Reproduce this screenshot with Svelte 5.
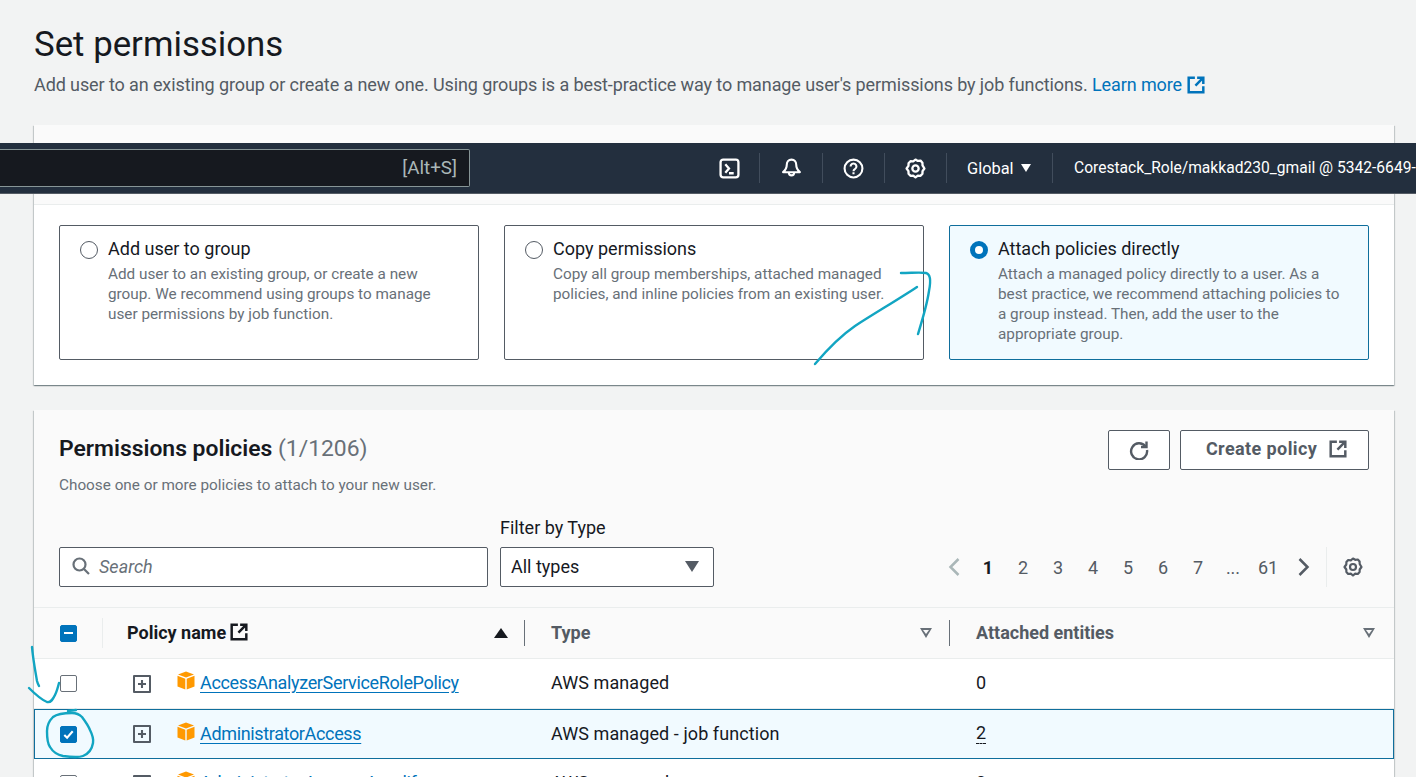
<script>
  const tiles = [
    {
      title: "Add user to group",
      text: "Add user to an existing group, or create a new group. We recommend using groups to manage user permissions by job function.",
      active: false
    },
    {
      title: "Copy permissions",
      text: "Copy all group memberships, attached managed policies, and inline policies from an existing user.",
      active: false
    },
    {
      title: "Attach policies directly",
      text: "Attach a managed policy directly to a user. As a best practice, we recommend attaching policies to a group instead. Then, add the user to the appropriate group.",
      active: true
    }
  ];

  const pages = ["1", "2", "3", "4", "5", "6", "7", "...", "61"];

  const rows = [
    { name: "AccessAnalyzerServiceRolePolicy", type: "AWS managed", count: "0", selected: false },
    { name: "AdministratorAccess", type: "AWS managed - job function", count: "2", selected: true },
    { name: "AdministratorAccess-Amplify", type: "AWS managed", count: "0", selected: false }
  ];
</script>

{#snippet external(cls)}
  <svg class={cls} viewBox="0 0 16 16" fill="none" stroke="currentColor" stroke-width="2.2">
    <path d="M7 1.500H1.500v13h13V9" />
    <path d="M7.500 8.500L14 1.800M9 1.500h5.500V7" />
  </svg>
{/snippet}

{#snippet gear(cls)}
  <svg class={cls} viewBox="0 0 20 20" fill="none" stroke="currentColor" stroke-width="2.2" stroke-linejoin="round">
    <path d="M10 1.500l2.200 1.300 2.600-.3 1.800 2 .1 2.500L18.500 10l-1.800 2.500-.1 2.500-1.800 2-2.600-.3L10 18.500l-2.200-1.800-2.600.3-1.800-2-.1-2.500L1.500 10l1.800-2.500.1-2.500 1.800-2 2.600.3z" />
    <circle cx="10" cy="10" r="3" />
  </svg>
{/snippet}

{#snippet cube()}
  <svg class="cube" viewBox="0 0 18 18" preserveAspectRatio="none">
    <path d="M9 0.500l8 2.800-8 2.900-8-2.900z" fill="#ff9900" />
    <path d="M.500 4.500l7.800 2.800v10.200L.500 14.700z" fill="#ff9900" />
    <path d="M17.500 4.500L9.700 7.300v10.200l7.800-2.800z" fill="#ff9900" />
  </svg>
{/snippet}

<div class="page">
  <h1>Set permissions</h1>
  <p class="lead">
    Add user to an existing group or create a new one. Using groups is a best-practice way to manage user's permissions by job functions.
    <a href="#learn">Learn more</a>
    {@render external("lead-ext")}
  </p>

  <section class="card options">
    <div class="options-head"></div>
    <div class="tiles">
      {#each tiles as tile}
        <div class="tile" class:active={tile.active}>
          <span class="radio"></span>
          <div class="tile-body">
            <div class="tile-title">{tile.title}</div>
            <div class="tile-text">{tile.text}</div>
          </div>
        </div>
      {/each}
    </div>
  </section>

  <section class="card policies">
    <div class="policies-head">
      <div class="head-top">
        <div>
          <h2>Permissions policies <span class="count">(1/1206)</span></h2>
          <p class="sub">Choose one or more policies to attach to your new user.</p>
        </div>
        <div class="actions">
          <button type="button" class="btn refresh" aria-label="Refresh">
            <svg viewBox="0 0 20 20" fill="none" stroke="currentColor" stroke-width="2.4">
              <path d="M16.500 6.500A8 8 0 1 0 18 10" />
              <path d="M17.500 1.500v5.500H12" />
            </svg>
          </button>
          <button type="button" class="btn create">Create policy {@render external("btn-ext")}</button>
        </div>
      </div>
      <div class="filters">
        <div class="search">
          <svg viewBox="0 0 18 18" fill="none" stroke="#687078" stroke-width="2.2">
            <circle cx="7.500" cy="7.500" r="6" />
            <path d="M12 12l5 5" />
          </svg>
          <span>Search</span>
        </div>
        <div class="type-filter">
          <label for="type-select">Filter by Type</label>
          <div class="select" id="type-select">
            <span>All types</span>
            <i class="select-caret"></i>
          </div>
        </div>
        <div class="pager">
          <svg class="chev off" viewBox="0 0 12 20" fill="none" stroke="currentColor" stroke-width="2.500"><path d="M10 2L2 10l8 8" /></svg>
          {#each pages as p, i}
            <span class="pg" class:current={i === 0}>{p}</span>
          {/each}
          <svg class="chev next" viewBox="0 0 12 20" fill="none" stroke="currentColor" stroke-width="2.500"><path d="M2 2l8 8-8 8" /></svg>
          <span class="pager-sep"></span>
          {@render gear("pager-gear")}
        </div>
      </div>
    </div>

    <div class="thead">
      <div class="cell check-cell">
        <span class="box checked"><i class="dash"></i></span>
        <span class="thin-sep"></span>
      </div>
      <div class="cell name-cell th dark">
        Policy name {@render external("th-ext")}
        <i class="sort-up"></i>
      </div>
      <div class="cell th type-cell">
        Type
        <i class="sort-down" style="right: 18px"></i>
      </div>
      <div class="cell th attached-cell">
        Attached entities
        <i class="sort-down" style="right: 19px"></i>
      </div>
    </div>

    {#each rows as row}
      <div class="row" class:selected={row.selected}>
        <div class="cell check-cell">
          <span class="box" class:checked={row.selected}>
            {#if row.selected}
              <svg viewBox="0 0 16 16" fill="none" stroke="#fff" stroke-width="2.200"><path d="M3.500 8.500l3 3 6-7" /></svg>
            {/if}
          </span>
        </div>
        <div class="cell name-cell">
          <span class="expand"><svg viewBox="0 0 10 10" stroke="#545b64" stroke-width="2.600"><path d="M5 0v10M0 5h10" /></svg></span>
          {@render cube()}
          <a href="#policy">{row.name}</a>
        </div>
        <div class="cell type-cell">{row.type}</div>
        <div class="cell attached-cell">
          {#if row.count === "2"}<span class="dotted">{row.count}</span>{:else}{row.count}{/if}
        </div>
      </div>
    {/each}
  </section>

  <header class="topnav">
    <div class="nav-search"><span>[Alt+S]</span></div>
    <div class="nav-item first">
      <svg class="nav-ico" viewBox="0 0 20 20" fill="none" stroke="#fff" stroke-width="2.2">
        <rect x="1.500" y="1.500" width="17" height="17" rx="2.500" />
        <path d="M6 6L9.500 10 6 14M9.500 14.500H14" />
      </svg>
    </div>
    <div class="nav-item bell">
      <svg class="nav-ico" viewBox="0 0 20 20" fill="none" stroke="#fff" stroke-width="2" stroke-linejoin="round">
        <path d="M10 1.500c3 0 4.500 2.500 4.500 5 0 3 .5 4.500 3.500 7H2c3-2.500 3.500-4 3.500-7 0-2.500 1.500-5 4.500-5z" />
        <path d="M7.500 14a2.500 2.500 0 0 0 5 0" />
      </svg>
    </div>
    <div class="nav-item">
      <svg class="nav-ico" viewBox="0 0 20 20" fill="none" stroke="#fff" stroke-width="2">
        <circle cx="10" cy="10" r="8.500" />
        <path d="M7.200 8a2.800 2.800 0 1 1 4.300 2.400c-1 .6-1.500 1-1.500 2.100M10 13.500v2" />
      </svg>
    </div>
    <div class="nav-item">
      {@render gear("nav-ico")}
    </div>
    <div class="nav-item region">Global <i class="nav-caret"></i></div>
    <div class="nav-item account">Corestack_Role/makkad230_gmail @ 5342-6649-9213</div>
  </header>

  <svg class="ink" viewBox="0 0 1416 777" fill="none" stroke="#12a5c2" stroke-width="2.400" stroke-linecap="round" stroke-linejoin="round">
    <path d="M901 273c10 0 20-1 25 0 4 1 5 8 3 18-2 14-7 30-11 43" />
    <path d="M917 287c-18 12-42 26-62 39-16 11-29 25-40 38" />
    <path d="M32 647c1 12 3 22 5 34 .5 2 1 3 2 5" />
    <path d="M29 688c5 5 13 12 18 14 4 1 6-3 8-7 2-4 3-8 4-12" />
    <path d="M68 711l8-1" />
    <path d="M72 713c-8 0-15 1-19 4-4 4-6 9-6 14 0 6 0 12 3 16 3 5 8 8 13 9 7 1 15 2 20 0 5-2 9-7 10-13 1-5-1-9-3-13-2-5-5-9-8-13-3-3-6-4-10-4" />
  </svg>
</div>

<style>
  :global(body) {
    margin: 0;
    font-family: "Roboto", "Liberation Sans", sans-serif;
    color: #16191f;
  }

  .page {
    position: relative;
    box-sizing: border-box;
    height: 777px;
    overflow: hidden;
    padding: 0 22px 0 34px;
    background: #f2f3f3;
  }

  h1 {
    margin: 0;
    padding-top: 24px;
    font-size: 34.800px;
    line-height: 40px;
    font-weight: 400;
  }

  .lead {
    margin: 11px 0 0;
    font-size: 18px;
    line-height: 20px;
    letter-spacing: -0.104px;
    color: #545b64;
    white-space: nowrap;
  }

  .lead a {
    color: #0073bb;
    text-decoration: none;
  }

  :global(.lead-ext) {
    width: 18px;
    height: 18px;
    color: #0073bb;
    vertical-align: -3px;
    margin-left: 1px;
  }

  .card {
    background: #fff;
    box-shadow: 0 1px 1px 0 rgba(0, 28, 36, 0.3), 1px 1px 1px 0 rgba(0, 28, 36, 0.15), -1px 1px 1px 0 rgba(0, 28, 36, 0.15);
  }

  .options {
    margin-top: 30px;
    height: 260px;
  }

  .options-head {
    height: 79px;
    background: #fafafa;
    border-bottom: 1px solid #eaeded;
  }

  .tiles {
    display: grid;
    grid-template-columns: repeat(3, 420px);
    column-gap: 25px;
    padding: 20px 25px 0;
  }

  .tile {
    box-sizing: border-box;
    height: 135px;
    display: flex;
    gap: 10px;
    padding: 13px 20px;
    border: 1px solid #545b64;
    border-radius: 2px;
  }

  .tile.active {
    background: #f1faff;
    border-color: #0f6e9c;
  }

  .radio {
    flex: none;
    box-sizing: border-box;
    width: 18px;
    height: 18px;
    margin-top: 2px;
    border: 1.500px solid #545b64;
    border-radius: 50%;
    background: #fff;
  }

  .active .radio {
    border: 5px solid #0073bb;
  }

  .tile-body {
    width: 345px;
  }

  .tile-title {
    font-size: 18px;
    line-height: 20px;
  }

  .tile-text {
    margin-top: 5px;
    font-size: 15.300px;
    line-height: 20px;
    color: #687078;
  }

  .policies {
    margin-top: 25px;
    background: #fafafa;
  }

  .policies-head {
    padding: 20px 25px 0;
    height: 198px;
    box-sizing: border-box;
    border-bottom: 1px solid #eaeded;
  }

  .head-top {
    display: flex;
    justify-content: space-between;
    height: 88px;
  }

  h2 {
    margin: 7px 0 0;
    font-size: 22.900px;
    line-height: 24px;
    font-weight: 600;
  }

  .count {
    font-weight: 400;
    color: #687078;
  }

  .sub {
    margin: 14px 0 0;
    font-size: 15.300px;
    line-height: 20px;
    color: #687078;
  }

  .actions {
    display: flex;
    gap: 10px;
  }

  .btn {
    box-sizing: border-box;
    height: 40px;
    border: 1px solid #545b64;
    border-radius: 2px;
    background: #fff;
    color: #545b64;
    font: inherit;
  }

  .refresh {
    width: 62px;
    padding: 0;
  }

  .refresh svg {
    width: 20px;
    height: 20px;
    vertical-align: middle;
  }

  .create {
    width: 189px;
    font-size: 18px;
    font-weight: 700;
    letter-spacing: 0.4px;
    padding: 0 0 3px 4px;
  }

  :global(.btn-ext) {
    width: 18px;
    height: 18px;
    vertical-align: -3px;
    margin-left: 7px;
  }

  .filters {
    display: flex;
    align-items: flex-end;
  }

  .search {
    box-sizing: border-box;
    width: 429px;
    height: 40px;
    display: flex;
    align-items: center;
    gap: 9px;
    padding: 0 0 2px 12px;
    border: 1px solid #545b64;
    border-radius: 2px;
    background: #fff;
    font-style: italic;
    font-size: 18px;
    color: #687078;
  }

  .search svg {
    width: 18px;
    height: 18px;
  }

  .type-filter {
    margin-left: 12px;
    width: 214px;
  }

  .type-filter label {
    display: block;
    font-size: 18px;
    line-height: 20px;
    margin-bottom: 9px;
    color: #16191f;
  }

  .select {
    box-sizing: border-box;
    height: 40px;
    display: flex;
    align-items: center;
    justify-content: space-between;
    padding: 0 14px 2px 10px;
    border: 1px solid #545b64;
    border-radius: 2px;
    background: #fff;
    font-size: 18px;
  }

  .select-caret {
    border-left: 7px solid transparent;
    border-right: 7px solid transparent;
    border-top: 11px solid #545b64;
  }

  .pager {
    margin-left: auto;
    margin-right: 6px;
    display: flex;
    align-items: center;
    height: 40px;
    color: #545b64;
    font-size: 18px;
  }

  .pg {
    width: 35px;
    text-align: center;
  }

  .pg.current {
    color: #16191f;
    font-weight: 700;
  }

  .chev {
    width: 13px;
    height: 20px;
    color: #545b64;
  }

  .chev.off {
    color: #aab7b8;
    margin-right: 9.500px;
  }

  .chev.next {
    margin-left: 11.500px;
  }

  .pager-sep {
    width: 1px;
    height: 40px;
    background: #eaeded;
    margin: 0 16px;
  }

  :global(.pager-gear) {
    width: 20px;
    height: 20px;
  }

  .thead,
  .row {
    display: grid;
    grid-template-columns: 69px 422px 425px 1fr;
    align-items: center;
  }

  .thead {
    box-sizing: border-box;
    height: 51px;
    border-bottom: 1px solid #eaeded;
    font-weight: 700;
    color: #545b64;
    font-size: 18px;
  }

  .cell {
    position: relative;
    display: flex;
    align-items: center;
    height: 100%;
    white-space: nowrap;
  }

  .check-cell {
    padding-left: 26px;
  }

  .name-cell {
    padding-left: 24px;
  }

  .thead .name-cell,
  .thead .type-cell,
  .thead .attached-cell {
    padding-bottom: 2px;
    box-sizing: border-box;
  }

  .thead .type-cell,
  .thead .attached-cell {
    padding-left: 26px;
  }

  .dark {
    color: #16191f;
    gap: 4px;
  }

  :global(.th-ext) {
    width: 18px;
    height: 18px;
    color: #16191f;
  }

  .thin-sep {
    position: absolute;
    right: 0;
    top: 10px;
    bottom: 10px;
    width: 1px;
    background: #eaeded;
  }

  .thead .name-cell::after,
  .thead .type-cell::after {
    content: "";
    position: absolute;
    right: 0;
    top: 12px;
    bottom: 12px;
    width: 1px;
    background: #687078;
  }

  .sort-up {
    position: absolute;
    right: 17px;
    top: 20px;
    border-left: 7px solid transparent;
    border-right: 7px solid transparent;
    border-bottom: 10px solid #16191f;
  }

  .sort-down {
    position: absolute;
    top: 20px;
    width: 0;
    height: 0;
    border-left: 6px solid transparent;
    border-right: 6px solid transparent;
    border-top: 10px solid #687078;
  }

  .sort-down::after {
    content: "";
    position: absolute;
    left: -3px;
    top: -8px;
    border-left: 3px solid transparent;
    border-right: 3px solid transparent;
    border-top: 4px solid #fafafa;
  }

  .row {
    box-sizing: border-box;
    height: 50px;
    background: #fff;
    border-bottom: 1px solid #eaeded;
    font-size: 18px;
  }

  .row.selected {
    background: #f1faff;
    outline: 1px solid #0f6e9c;
    outline-offset: -1px;
    border-bottom: none;
  }

  .row .type-cell,
  .row .attached-cell {
    box-sizing: border-box;
    padding: 0 0 2px 26px;
    letter-spacing: 0.08px;
  }

  .box {
    box-sizing: border-box;
    display: inline-flex;
    align-items: center;
    justify-content: center;
    width: 17px;
    height: 17px;
    border: 1px solid #687078;
    border-radius: 2px;
    background: #fff;
  }

  .box.checked {
    background: #0073bb;
    border-color: #0073bb;
  }

  .box svg {
    width: 15px;
    height: 15px;
  }

  .dash {
    width: 9px;
    height: 2px;
    background: #fff;
  }

  .expand {
    box-sizing: border-box;
    display: inline-flex;
    align-items: center;
    justify-content: center;
    width: 18px;
    height: 18px;
    margin-left: 6px;
    border: 2.500px solid #545b64;
    border-radius: 1px;
  }

  .expand svg {
    width: 8px;
    height: 8px;
  }

  :global(.cube) {
    width: 18px;
    height: 19px;
    margin: -6px 5px 0 26px;
  }

  .name-cell a {
    margin-bottom: 2px;
    color: #0073bb;
    letter-spacing: -0.35px;
    text-decoration: underline;
    text-underline-offset: 3px;
  }

  .dotted {
    border-bottom: 1px dashed #16191f;
  }

  .topnav {
    position: absolute;
    left: 0;
    right: 0;
    top: 143px;
    height: 51px;
    display: flex;
    align-items: center;
    background: #232f3e;
    border-bottom: 1px solid #545b64;
    box-sizing: border-box;
    color: #fff;
    white-space: nowrap;
    font-size: 15.600px;
  }

  .nav-search {
    flex: none;
    box-sizing: border-box;
    width: 470px;
    height: 38px;
    display: flex;
    align-items: center;
    justify-content: flex-end;
    padding-right: 12px;
    background: #16191f;
    border: 1px solid #879596;
    border-left: none;
    border-radius: 0 2px 2px 0;
    color: #aab7b8;
    font-size: 18.800px;
  }

  .nav-item {
    flex: none;
    box-sizing: border-box;
    display: flex;
    align-items: center;
    justify-content: center;
    height: 30px;
    width: 62px;
    border-left: 1px solid #414d5c;
  }

  .nav-item.first {
    margin-left: 229px;
    width: 60px;
    border-left: none;
  }

  .nav-item.bell {
    width: 63px;
  }

  :global(.nav-ico) {
    width: 21px;
    height: 21px;
    color: #fff;
  }

  .region {
    width: 106px;
    gap: 7px;
    justify-content: flex-start;
    padding-left: 20px;
    font-size: 16.400px;
  }

  .nav-caret {
    border-left: 5px solid transparent;
    border-right: 5px solid transparent;
    border-top: 8px solid #fff;
  }

  .account {
    width: auto;
    justify-content: flex-start;
    padding-left: 21px;
  }

  .ink {
    position: absolute;
    left: 0;
    top: 0;
    width: 1416px;
    height: 777px;
    pointer-events: none;
  }
</style>
